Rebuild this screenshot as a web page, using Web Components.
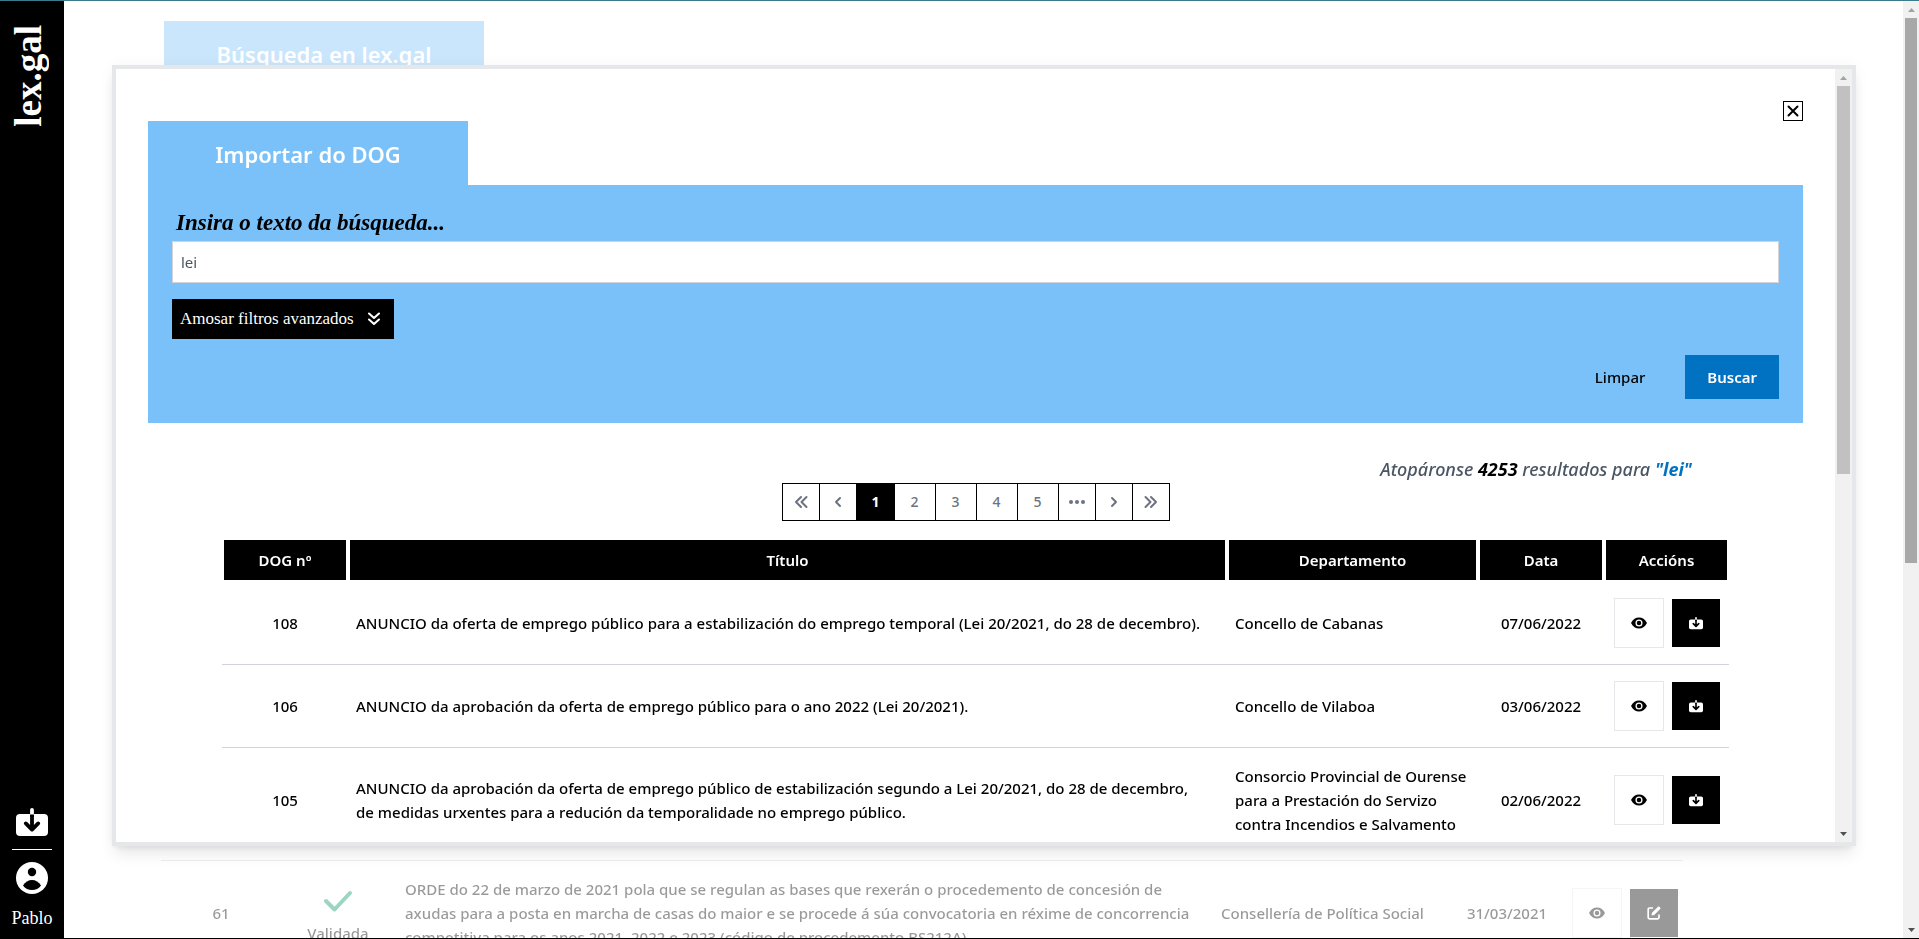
<!DOCTYPE html>
<html lang="gl">
<head>
<meta charset="utf-8">
<title>lex.gal</title>
<style>
  html, body { height: 100%; margin: 0; }
  body {
    --sans: "Noto Sans", "Open Sans", sans-serif;
    --serif: "Liberation Serif", serif;
    --sky: #79c1f8;
    --blue: #0072c1;
    --line: #d1d5db;
    --edge: #e5e7eb;
    font: 500 15px/24px var(--sans);
    color: #000;
    background: #fff;
    overflow: hidden;
  }
</style>
</head>
<body>
<lex-app>
  <lex-sidebar slot="nav" user="Pablo"></lex-sidebar>
  <lex-backdrop slot="page"></lex-backdrop>
  <lex-modal slot="modal">
    <lex-search heading="Importar do DOG" value="lei"></lex-search>
    <lex-summary total="4253" query="lei"></lex-summary>
    <lex-pager></lex-pager>
    <lex-results></lex-results>
  </lex-modal>
</lex-app>

<script>
const define = (name, render) => customElements.define(name, class extends HTMLElement {
  connectedCallback() {
    if (this.shadowRoot) return;
    const root = this.attachShadow({ mode: 'open' });
    root.innerHTML = '<style>*{box-sizing:border-box}button{font:inherit;color:inherit;border:0;padding:0;margin:0;cursor:pointer}</style>' + render(this);
  }
});

/* ---------- icons ---------- */
const chev = d => `<path d="${d}" fill="none" stroke="currentColor" stroke-width="2" stroke-linecap="round" stroke-linejoin="round"/>`;
const ICONS = {
  inbox: ['0 0 32 28', `<rect x="0" y="6" width="32" height="22" rx="4" fill="currentColor"/><path d="M16 6v15M9.8 15.4 16 21.6l6.200-6.200" fill="none" stroke="#000" stroke-width="3.800" stroke-linecap="round" stroke-linejoin="round"/><path d="M14.100 7V2q0-2 1.900-2t1.900 2v5z" fill="currentColor"/><path d="M14.100 6.500h3.800V9h-3.800z" fill="#000"/>`],
  user: ['0 0 32 32', `<circle cx="16" cy="16" r="16" fill="currentColor"/><circle cx="16" cy="10" r="4.200" fill="#000"/><path d="M7 23.500C9 20 12.500 18 16 18s7 2 9 5.500C23 26.500 19.500 28 16 28s-7-1.500-9-4.500z" fill="#000"/>`],
  close: ['0 0 20 20', `<path d="M5 5l10 10M15 5 5 15" stroke="currentColor" stroke-width="2.200" stroke-linecap="round"/>`],
  down2: ['0 0 16 16', chev('M3 2.500l5 4.500 5-4.500M3 8.500l5 4.500 5-4.500')],
  first: ['0 0 16 16', chev('M8 3 3 8l5 5M13.500 3l-5 5 5 5')],
  prev: ['0 0 16 16', chev('M10 4 6 8l4 4')],
  next: ['0 0 16 16', chev('M6 4l4 4-4 4')],
  last: ['0 0 16 16', chev('M8 3l5 5-5 5M2.500 3l5 5-5 5')],
  dots: ['0 0 16 16', `<g fill="currentColor"><circle cx="2" cy="8" r="2"/><circle cx="8" cy="8" r="2"/><circle cx="14" cy="8" r="2"/></g>`],
  eye: ['0 0 16 16', `<path d="M0 8C2 4.200 4.800 2.500 8 2.500S14 4.200 16 8c-2 3.800-4.800 5.500-8 5.500S2 11.800 0 8z" fill="currentColor"/><circle cx="8" cy="8" r="2.900" fill="none" stroke="#fff" stroke-width="1.300"/>`],
  edit: ['0 0 14 14', `<path d="M6 2H2.500Q1.200 2 1.200 3.300v8.200q0 1.300 1.300 1.300h8.200q1.300 0 1.300-1.300V8.500" fill="none" stroke="#fff" stroke-width="1.700"/><path d="M4.500 9.500l.5-2.700L11 .8q.7-.6 1.400 0l.8.8q.6.700 0 1.400l-6 6z" fill="#fff"/>`],
  check: ['0 0 32 32', `<path d="M4 16l8.500 8.500L28 8" fill="none" stroke="#059669" stroke-width="4" stroke-linecap="round" stroke-linejoin="round"/>`],
};
define('lex-icon', el => {
  const [box, art] = ICONS[el.getAttribute('name')];
  return `<style>:host{display:inline-flex;width:16px;height:16px;flex:none}svg{width:100%;height:100%;display:block}</style>
    <svg viewBox="${box}" aria-hidden="true">${art}</svg>`;
});

/* ---------- scroll rail ---------- */
define('lex-rail', el => `<style>
  :host{display:flex;flex-direction:column;flex:none;width:17px;background:#f1f1f1}
  .arrow{flex:none;height:17px;display:grid;place-items:center}
  svg{width:7px;height:4px;display:block}
  .track{flex:1;min-height:0;padding:0 2px}
  .thumb{height:${el.getAttribute('extent')};background:${el.getAttribute('tone')}}
</style>
<div class="arrow"><svg viewBox="0 0 7 4"><path d="M3.500 0 7 4H0z" fill="#a3a3a3"/></svg></div>
<div class="track"><div class="thumb"></div></div>
<div class="arrow"><svg viewBox="0 0 7 4"><path d="M0 0h7L3.500 4z" fill="#505050"/></svg></div>`);

/* ---------- shell ---------- */
define('lex-app', () => `<style>
  :host{display:flex;height:100%;border-top:1px solid #3b7a8a;border-bottom:1px solid #000;position:relative;box-sizing:border-box}
  main{flex:1;min-width:0;display:flex;position:relative}
  .page{flex:1;min-width:0;display:flex;opacity:.4}
  lex-rail{width:16px}
  .layer{position:absolute;inset:64px 63px 92px 48px;display:flex}
</style>
<slot name="nav"></slot>
<main>
  <div class="page"><slot name="page"></slot></div>
  <lex-rail extent="60.4%" tone="#a8a8a8"></lex-rail>
  <div class="layer"><slot name="modal"></slot></div>
</main>`);

define('lex-sidebar', el => `<style>
  :host{display:flex;flex:none;width:64px;background:#000;color:#fff}
  nav{flex:1;min-width:0;display:flex;flex-direction:column;align-items:center;padding:24px 12px 8px}
  .brand{font:700 37px/32px var(--serif);writing-mode:vertical-rl;transform:rotate(180deg);color:#fff;text-decoration:none;margin:0 6px auto 0}
  button{background:none;color:inherit;display:flex;flex-direction:column;align-items:center}
  .tray{width:32px;height:28px}
  hr{width:100%;height:1px;border:0;background:#fff;margin:13px 0 12px}
  .face{width:32px;height:32px}
  .name{font:400 18px/24px var(--serif);margin-top:12px}
</style>
<nav>
  <a class="brand" href="#">lex.gal</a>
  <button aria-label="Importar"><lex-icon class="tray" name="inbox"></lex-icon></button>
  <hr>
  <button><lex-icon class="face" name="user"></lex-icon><span class="name">${el.getAttribute('user')}</span></button>
</nav>`);

const actionCss = `
  .actions{display:flex;align-items:center;justify-content:center;gap:8px}
  .view{width:50px;height:50px;background:#fff;border:1px solid var(--edge);display:grid;place-items:center}
  .act{width:48px;height:48px;background:#000;color:#fff;display:grid;place-items:center}
  .act lex-icon{width:14px;height:14px}`;

/* ---------- page behind the dialog ---------- */
define('lex-backdrop', () => `<style>
  :host{flex:1;min-width:0;display:flex;flex-direction:column;padding:20px 220px 0 97px;overflow:hidden;box-sizing:border-box}
  h1{width:320px;height:64px;margin:0 0 auto 3px;background:var(--sky);color:#fff;font:600 22px/66px var(--sans);text-align:center}
  .rows{height:78px;overflow:hidden;flex:none}
  table{width:100%;border-collapse:separate;border-spacing:0;table-layout:fixed;border-top:1px solid var(--line)}
  td{padding:16px 0;vertical-align:middle;text-align:center}
  td.text{text-align:left;padding-left:10px}
  .state{display:flex;flex-direction:column;align-items:center;gap:4px;padding-top:4px}
  .state lex-icon{width:32px;height:32px}
  ${actionCss}
</style>
<h1>Búsqueda en lex.gal</h1>
<div class="rows"><table>
  <colgroup><col style="width:120px"><col style="width:114px"><col><col style="width:236px"><col style="width:120px"><col style="width:116px"></colgroup>
  <tr><td>61</td>
    <td><div class="state"><lex-icon name="check"></lex-icon><span>Validada</span></div></td>
    <td class="text">ORDE do 22 de marzo de 2021 pola que se regulan as bases que rexerán o procedemento de concesión de<br>axudas para a posta en marcha de casas do maior e se procede á súa convocatoria en réxime de concorrencia<br>competitiva para os anos 2021, 2022 e 2023 (código de procedemento BS212A).</td>
    <td class="text">Consellería de Política Social</td>
    <td>31/03/2021</td>
    <td><div class="actions"><button class="view" aria-label="Ver"><lex-icon name="eye"></lex-icon></button><button class="act" aria-label="Editar"><lex-icon name="edit"></lex-icon></button></div></td>
  </tr>
</table></div>`);

/* ---------- dialog ---------- */
define('lex-modal', () => `<style>
  :host{flex:1;min-width:0;display:flex;background:#fff;border:4px solid var(--edge);box-shadow:0 10px 15px -3px rgba(0,0,0,.1),0 4px 6px -2px rgba(0,0,0,.05),0 0 14px rgba(0,0,0,.04);box-sizing:border-box}
  section{flex:1;min-width:0;overflow:hidden;padding:32px 32px 0}
  .bar{display:flex;justify-content:flex-end}
  .bar button{width:20px;height:20px;background:#fff;border:1px solid #000;display:grid;place-items:center}
  .bar lex-icon{width:18px;height:18px}
</style>
<section role="dialog" aria-label="Importar do DOG">
  <div class="bar"><button aria-label="Pechar"><lex-icon name="close"></lex-icon></button></div>
  <slot></slot>
</section>
<lex-rail extent="52.5%" tone="#c1c1c1"></lex-rail>`);

define('lex-search', el => `<style>
  :host{display:block}
  h2{width:320px;height:64px;margin:0;background:var(--sky);color:#fff;font:600 22px/66px var(--sans);text-align:center}
  form{background:var(--sky);padding:24px;display:flex;flex-direction:column;align-items:flex-start;margin:0}
  label{font:italic 700 23px/28px var(--serif);padding-left:4px;height:32px}
  input{width:100%;height:42px;border:1px solid #d1d5db;border-radius:0;padding:0 8px;background:#fff;color:#4b5563;font:400 15px/24px var(--sans);outline:0}
  .more{height:40px;margin-top:16px;padding:0 12px 0 8px;background:#000;color:#fff;font:400 17px/24px var(--serif);display:flex;align-items:center;gap:12px}
  .end{align-self:stretch;display:flex;justify-content:flex-end;margin-top:16px;gap:16px}
  .end button{height:44px;padding:0 24px;background:none}
  .end .go{padding:0 22px;background:var(--blue);color:#fff;font-weight:600}
</style>
<h2>${el.getAttribute('heading')}</h2>
<form onsubmit="return false">
  <label for="q">Insira o texto da búsqueda...</label>
  <input id="q" type="text" value="${el.getAttribute('value')}">
  <button type="button" class="more"><span>Amosar filtros avanzados</span><lex-icon name="down2"></lex-icon></button>
  <div class="end"><button type="reset">Limpar</button><button class="go" type="submit">Buscar</button></div>
</form>`);

define('lex-summary', el => `<style>
  :host{display:block;margin-top:32px;padding-right:111px;text-align:right;font:italic 500 18px/28px var(--sans);color:#4b5563}
  b{font-weight:700;color:#000} em{font-weight:700;color:var(--blue)}
</style>Atopáronse <b>${el.getAttribute('total')}</b> resultados para <em>"${el.getAttribute('query')}"</em>`);

define('lex-pager', () => {
  const icon = (n, l) => `<button class="i" aria-label="${l}"><lex-icon name="${n}"></lex-icon></button>`;
  return `<style>
  :host{display:flex;justify-content:center}
  nav{display:flex;height:38px;border:1px solid #000}
  button{width:41px;background:#fff;color:#6b7280;font:500 14px/20px var(--sans);display:grid;place-items:center;border-left:1px solid #000}
  button.i{width:37px}
  button.i:first-child{border-left:0;width:36px}
  .on{width:39px;background:#000;color:#fff;font-weight:700}
  .on + button{border-left:0;width:40px}
</style>
<nav aria-label="Páxinas">${icon('first', 'Primeira')}${icon('prev', 'Anterior')}<button class="on" aria-current="page">1</button>${[2, 3, 4, 5].map(n => `<button>${n}</button>`).join('')}${icon('dots', 'Máis')}${icon('next', 'Seguinte')}${icon('last', 'Última')}</nav>`;
});

const ROWS = [
  ['108', 'ANUNCIO da oferta de emprego público para a estabilización do emprego temporal (Lei 20/2021, do 28 de decembro).', 'Concello de Cabanas', '07/06/2022'],
  ['106', 'ANUNCIO da aprobación da oferta de emprego público para o ano 2022 (Lei 20/2021).', 'Concello de Vilaboa', '03/06/2022'],
  ['105', 'ANUNCIO da aprobación da oferta de emprego público de estabilización segundo a Lei 20/2021, do 28 de decembro,<br>de medidas urxentes para a redución da temporalidade no emprego público.', 'Consorcio Provincial de Ourense para a Prestación do Servizo contra Incendios e Salvamento', '02/06/2022'],
];
define('lex-results', () => `<style>
  :host{display:block;margin:17px 74px 0}
  table{width:100%;border-collapse:separate;border-spacing:0;table-layout:fixed}
  th{height:44px;padding:0;border:2px solid #fff;background:#000;background-clip:padding-box;color:#fff;font-weight:600}
  td{padding:16px 0;border-bottom:1px solid var(--line);text-align:center;vertical-align:middle}
  td.text{text-align:left;padding-left:8px;padding-right:8px}
  ${actionCss}
</style>
<table>
  <colgroup><col style="width:126px"><col><col style="width:251px"><col style="width:126px"><col style="width:125px"></colgroup>
  <thead><tr><th>DOG nº</th><th>Título</th><th>Departamento</th><th>Data</th><th>Accións</th></tr></thead>
  <tbody>${ROWS.map(([n, t, d, f]) => `<tr><td>${n}</td><td class="text">${t}</td><td class="text">${d}</td><td>${f}</td>
    <td><div class="actions"><button class="view" aria-label="Ver"><lex-icon name="eye"></lex-icon></button><button class="act" aria-label="Importar"><lex-icon name="inbox"></lex-icon></button></div></td></tr>`).join('')}</tbody>
</table>`);
</script>
</body>
</html>
